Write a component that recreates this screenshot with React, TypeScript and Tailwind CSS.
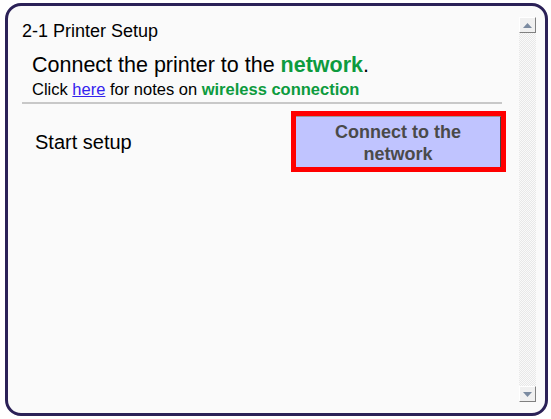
import React from "react";

const ScrollArrow = ({ down }: { down?: boolean }) => (
  <div className="w-[17px] h-[16px] bg-[#f0f0f0] border border-t-[#fff] border-l-[#fff] border-r-[#808080] border-b-[#808080] flex items-center justify-center">
    <svg width="9" height="5" viewBox="0 0 9 5">
      {down ? (
        <polygon points="0,0 9,0 4.5,5" fill="#7a8aa0" />
      ) : (
        <polygon points="0,5 9,5 4.5,0" fill="#7a8aa0" />
      )}
    </svg>
  </div>
);

export default function App() {
  return (
    <div className="w-[551px] h-[419px] bg-white pt-[3px] pl-[5px] font-['Liberation_Sans',Arial,sans-serif]">
      <div className="w-[543px] h-[413px] border-[3px] border-[#2b2157] rounded-[16px] bg-[#fafafa] flex overflow-hidden">
        <div className="flex-1 pl-[14px] pr-[9px] pt-[14px]">
          <div className="text-[18px] leading-[22px] text-black">2-1 Printer Setup</div>
          <div className="pl-[10px] mt-[10px]">
            <div className="text-[21.5px] leading-[26px] text-black">
              Connect the printer to the{" "}
              <span className="font-bold text-[#0d9b3e]">network</span>.
            </div>
            <div className="text-[16.5px] leading-[20px] mt-[1px] text-black">
              Click <span className="text-[#3322ee] underline">here</span> for notes on{" "}
              <span className="font-bold text-[#0d9b3e]">wireless connection</span>
            </div>
          </div>
          <div className="h-[2px] bg-[#c8c8c8] mt-[3px] mr-[8px]" />
          <div className="flex items-center justify-between mt-[7px]">
            <div className="pl-[13px] text-[20px] text-black">Start setup</div>
            <div className="border-[5px] border-[#ff0000] mr-[4px]">
              <div className="w-[205px] h-[51px] pt-[1px] bg-[#c0c4ff] border-t border-t-[#999] border-r border-r-[#444] flex items-center justify-center text-center text-[18px] leading-[22px] font-bold text-[#4a4a4a]">
                Connect to the
                <br />
                network
              </div>
            </div>
          </div>
        </div>
        <div className="w-[17px] mr-[9px] mt-[11px] mb-[11px] flex flex-col">
          <ScrollArrow />
          <div className="flex-1 bg-[repeating-conic-gradient(#e8e8e8_0%_25%,#fafafa_0%_50%)] bg-[length:2px_2px]" />
          <ScrollArrow down />
        </div>
      </div>
    </div>
  );
}
